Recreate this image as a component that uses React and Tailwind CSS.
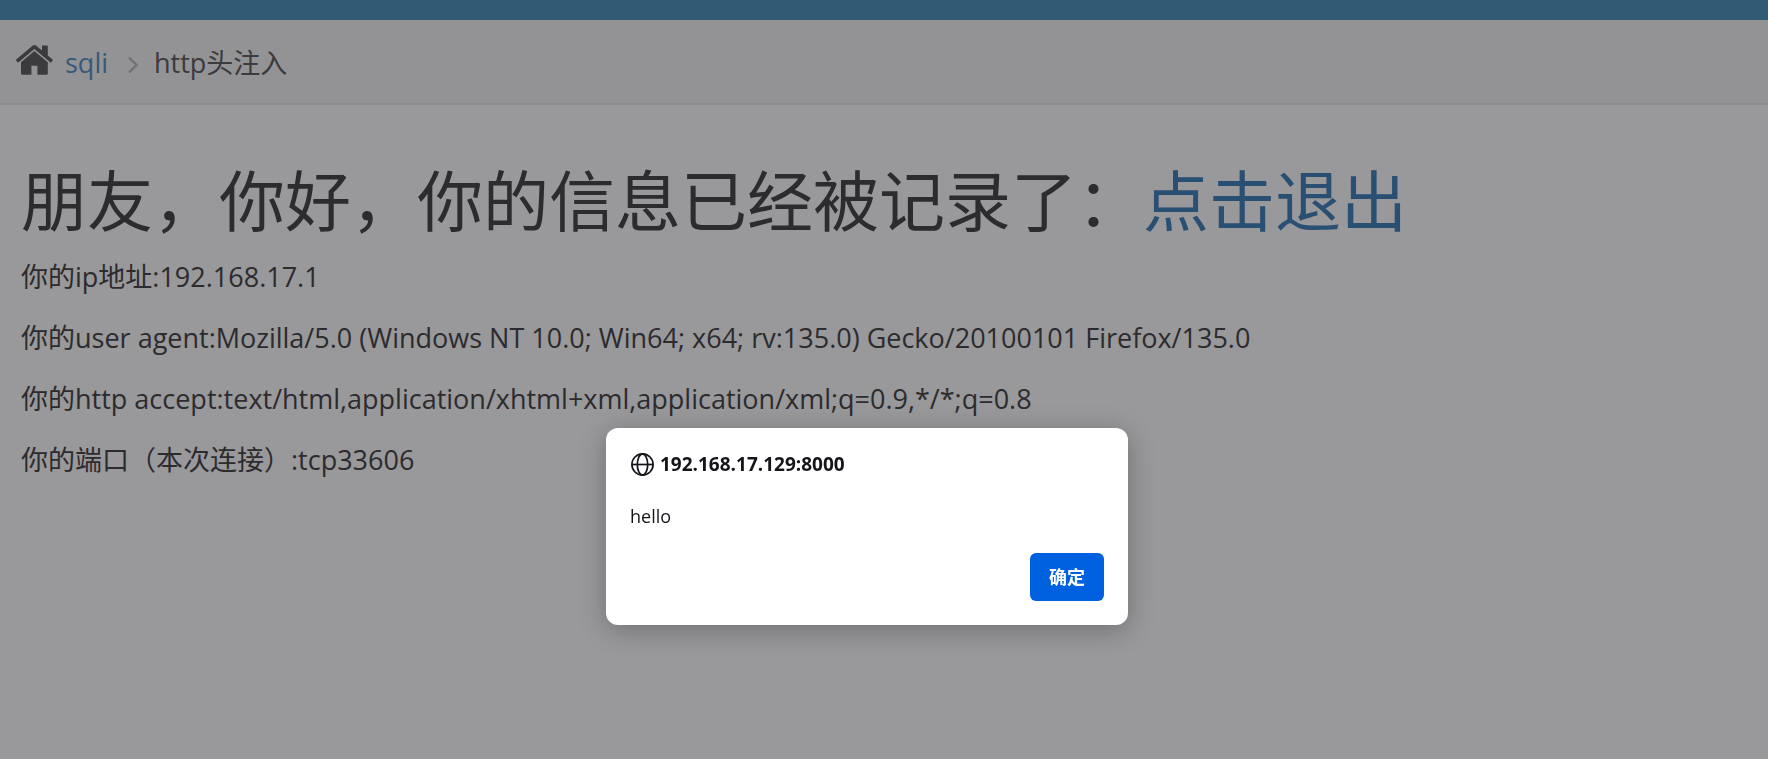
import React from "react";

const details = [
  "你的ip地址:192.168.17.1",
  "你的user agent:Mozilla/5.0 (Windows NT 10.0; Win64; x64; rv:135.0) Gecko/20100101 Firefox/135.0",
  "你的http accept:text/html,application/xhtml+xml,application/xml;q=0.9,*/*;q=0.8",
  "你的端口（本次连接）:tcp33606",
];

function HomeIcon() {
  return (
    <svg aria-hidden="true" viewBox="0 0 37 30" className="mb-1.5 h-[30px] w-[37px] text-[#555555]" fill="currentColor">
      <path d="M20.3 0.7 Q18.4 -0.7 16.5 0.7 L0.2 14.6 Q-0.2 15 0.2 15.5 L1.6 17.2 Q2 17.6 2.6 17.2 L18.4 4 L34.2 17.2 Q34.8 17.6 35.2 17.2 L36.6 15.5 Q37 15 36.6 14.6 L31.8 10.5 L31.8 1.2 Q31.8 0.5 31.1 0.5 L26.7 0.5 Q26 0.5 26 1.2 L26 5.6 Z" />
      <path d="M18.4 6 L5 17.2 L5 28.6 Q5 29.8 6.2 29.8 L15.4 29.8 L15.4 20.8 L21.4 20.8 L21.4 29.8 L30.6 29.8 Q31.8 29.8 31.8 28.6 L31.8 17.2 Z" />
    </svg>
  );
}

function GlobeIcon() {
  return (
    <svg aria-hidden="true" viewBox="0 0 24 24" className="size-6" fill="none" stroke="currentColor" strokeWidth="1.7">
      <circle cx="12.5" cy="12.5" r="10.6" />
      <ellipse cx="12.5" cy="12.5" rx="5.2" ry="10.6" />
      <path d="M1.9 12.5 H23.1" />
    </svg>
  );
}

function AlertDialog() {
  return (
    <div className="fixed inset-0 flex items-start justify-center bg-[#1c1b22]/45 pt-[428px] pr-[34px]">
      <section
        role="alertdialog"
        aria-labelledby="alert-title"
        aria-describedby="alert-message"
        className="flex w-[522px] flex-col rounded-xl bg-white p-6 text-[18px] leading-6 text-[#15141a] shadow-[0_5px_28px_rgba(0,0,0,0.28)]"
      >
        <h2 id="alert-title" className="flex items-center gap-1.5 text-[19px] font-bold">
          <GlobeIcon />
          192.168.17.129:8000
        </h2>
        <p id="alert-message" className="mt-7">hello</p>
        <button type="button" className="mt-[25px] h-12 self-end rounded-md bg-[#0061e0] px-[19px] font-bold text-white">
          确定
        </button>
      </section>
    </div>
  );
}

export default function App() {
  return (
    <div className="min-h-screen bg-white font-['Open_Sans','Noto_Sans_CJK_SC',sans-serif] text-[27px] leading-[41px] text-[#393939]">
      <header className="h-5 bg-[#438eb9]" />
      <nav aria-label="breadcrumb" className="border-b-2 border-[#e5e5e5] bg-[#f5f5f5]">
        <ol className="flex h-[83px] items-center pt-0.5 pl-4">
          <li className="flex items-center gap-3">
            <HomeIcon />
            <a href="#sqli" className="text-[#4c8fbd]">sqli</a>
          </li>
          <li className="flex items-center text-[#555555]">
            <svg aria-hidden="true" viewBox="0 0 10 18" className="mt-1 mr-4 ml-5 h-[18px] w-[10px]" fill="none" stroke="#b2b6bf" strokeWidth="2.4">
              <path d="M1 1.5 L8.5 9 L1 16.5" />
            </svg>
            http头注入
          </li>
        </ol>
      </nav>
      <main className="px-[21px] pt-[55px]">
        <h1 className="text-[66px] leading-[80px]">
          朋友，你好，你的信息已经被记录了：<a href="#logout" className="text-[#337ab7]">点击退出</a>
        </h1>
        <div className="mt-4 flex flex-col gap-5">
          {details.map((line) => (
            <p key={line}>{line}</p>
          ))}
        </div>
      </main>
      <AlertDialog />
    </div>
  );
}
